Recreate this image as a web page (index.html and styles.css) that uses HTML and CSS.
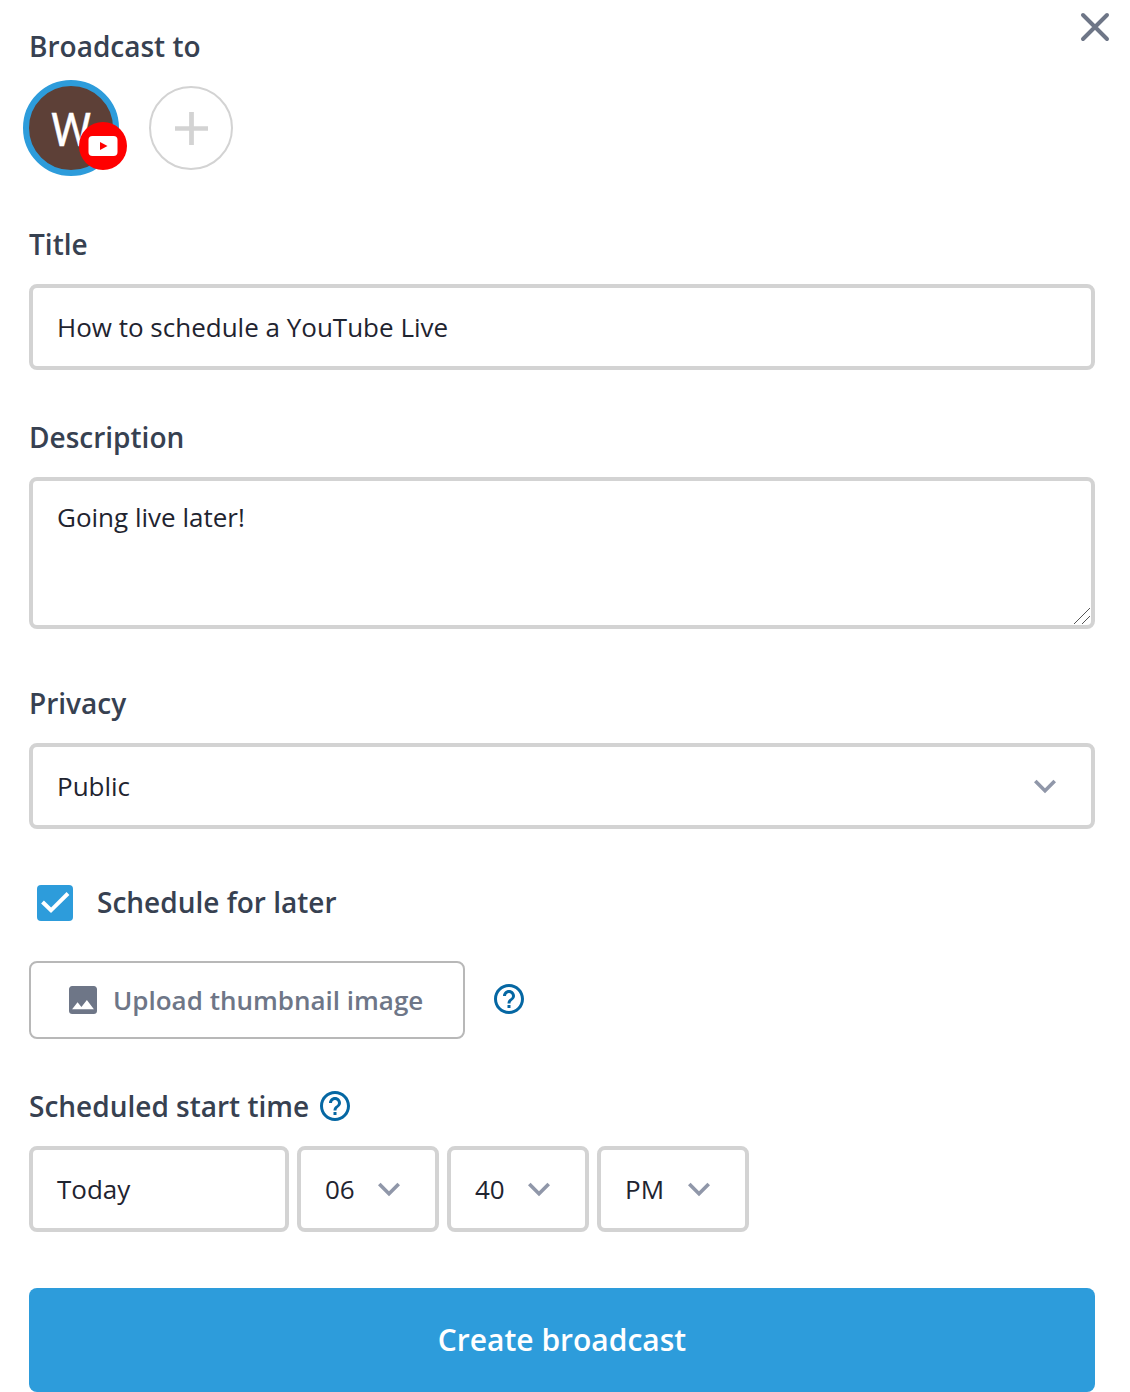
FILE: index.html
```html
<!DOCTYPE html>
<html lang="en">
<head>
<meta charset="utf-8">
<title>Create broadcast</title>
<link rel="stylesheet" href="styles.css">
</head>
<body>
<svg width="0" height="0" class="sprite" aria-hidden="true">
  <symbol id="chevron" viewBox="0 0 24 24"><path d="M7.41 8.59 12 13.17l4.59-4.58L18 10l-6 6-6-6z"/></symbol>
  <symbol id="help" viewBox="0 0 24 24"><path d="M11 18h2v-2h-2v2zm1-16C6.48 2 2 6.48 2 12s4.48 10 10 10 10-4.48 10-10S17.52 2 12 2zm0 18c-4.41 0-8-3.59-8-8s3.59-8 8-8 8 3.59 8 8-3.59 8-8 8zm0-14c-2.21 0-4 1.79-4 4h2c0-1.1.9-2 2-2s2 .9 2 2c0 2-3 1.75-3 5h2c0-2.25 3-2.5 3-5 0-2.21-1.79-4-4-4z"/></symbol>
</svg>
<form class="broadcast">
  <button class="close" type="button" aria-label="Close"><svg viewBox="0 0 30 30"><path d="M3 3l24 24M27 3 3 27"/></svg></button>

  <div class="label l-broadcast">Broadcast to</div>
  <div class="accounts">
    <div class="avatar"><span class="initial">W</span>
      <span class="badge"><svg viewBox="0 0 30 20"><rect width="29" height="20" x=".5" rx="4"/><path class="play" d="M12 6l7.5 4-7.5 4z"/></svg></span>
    </div>
    <button class="add" type="button" aria-label="Add"><svg viewBox="0 0 32 32"><path d="M16 0v32M0 16h32"/></svg></button>
  </div>

  <div class="label l-title">Title</div>
  <div class="field">How to schedule a YouTube Live</div>

  <div class="label l-desc">Description</div>
  <div class="field area">Going live later!<svg class="grip" viewBox="0 0 18 18"><path d="M1 17 17 1M9 17l8-8"/></svg></div>

  <div class="label l-privacy">Privacy</div>
  <div class="field select">Public<svg class="chevron"><use href="#chevron"/></svg></div>

  <div class="check-row">
    <span class="checkbox"><svg viewBox="0 0 36 36"><path d="M5.500 17l8.500 8.300L31 8.500"/></svg></span>
    <span class="label l-later">Schedule for later</span>
  </div>

  <div class="upload-row">
    <button class="upload" type="button">
      <svg class="image" viewBox="3 3 18 18"><path d="M21 19V5c0-1.100-.9-2-2-2H5c-1.100 0-2 .9-2 2v14c0 1.100.9 2 2 2h14c1.100 0 2-.9 2-2zM8.500 13.500l2.500 3.010L14.500 12l4.500 6H5l3.500-4.500z"/></svg>
      <span class="t-upload">Upload thumbnail image</span>
    </button>
    <svg class="help"><use href="#help"/></svg>
  </div>

  <div class="time-label"><span class="label l-time">Scheduled start time</span><svg class="help"><use href="#help"/></svg></div>
  <div class="times">
    <div class="field day">Today</div>
    <div class="field part">06<svg class="chevron"><use href="#chevron"/></svg></div>
    <div class="field part">40<svg class="chevron"><use href="#chevron"/></svg></div>
    <div class="field part period">PM<svg class="chevron"><use href="#chevron"/></svg></div>
  </div>

  <button class="create" type="submit"><span>Create broadcast</span></button>
</form>
</body>
</html>
```
FILE: styles.css
```css
* { box-sizing: border-box; }
body { margin: 0; background: #fff; font-family: "Open Sans", sans-serif; color: #1f2430; }
svg { display: block; flex: none; }
.sprite { position: absolute; }
button { font: inherit; margin: 0; padding: 0; cursor: pointer; }

.broadcast { position: relative; width: 1130px; height: 1392px; padding: 27px 35px 0 29px; overflow: hidden; }

.close { position: absolute; top: 12px; right: 20px; width: 30px; height: 30px; border: 0; background: none; }
.close svg { width: 30px; height: 30px; fill: none; stroke: #6e7687; stroke-width: 4; stroke-linecap: round; }

.label { font-size: 28px; line-height: 38px; font-weight: 600; color: #374151; white-space: nowrap; }
div.label { width: max-content; }

.accounts { display: flex; align-items: center; gap: 30px; height: 96px; margin: 15px 0 49px -6px; }
.avatar { position: relative; display: flex; align-items: center; justify-content: center; width: 96px; height: 96px; border: 6px solid #2d9cdb; border-radius: 50%; background: #5d4037; }
.initial { padding-top: 3px; font: 400 46px/56px Roboto, sans-serif; color: #fff; -webkit-text-stroke: .4px #fff; }
.badge { position: absolute; left: 50px; top: 36px; display: flex; align-items: center; justify-content: center; width: 48px; height: 48px; border-radius: 50%; background: #f00; }
.badge svg { width: 30px; height: 20px; fill: #fff; }
.badge .play { fill: #f00; }
.add { display: flex; align-items: center; justify-content: center; width: 84px; height: 84px; border: 2px solid #d3d3d3; border-radius: 50%; background: #fff; }
.add svg { width: 33px; height: 33px; stroke: #d3d3d3; stroke-width: 4.600; }

.field { position: relative; display: flex; align-items: center; height: 86px; margin-top: 21px; padding: 0 24px; border: 4px solid #d3d3d3; border-radius: 8px; background: #fff; font-size: 26px; line-height: 36px; white-space: nowrap; }
.area { align-items: flex-start; height: 152px; padding-top: 18px; }
.grip { position: absolute; right: 0; bottom: 0; width: 18px; height: 18px; stroke: #555; stroke-width: 1; }
.l-desc { margin-top: 48px; }
.l-privacy { margin-top: 55px; }
.select { justify-content: space-between; }
.chevron { width: 44px; height: 44px; fill: #9097a9; }

.check-row { display: flex; align-items: center; gap: 24px; height: 36px; margin: 56px 0 0 8px; }
.check-row .label { margin-bottom: 2px; }
.checkbox { width: 36px; height: 36px; border-radius: 4px; background: #2d9cdb; }
.checkbox svg { fill: none; stroke: #fff; stroke-width: 4; }

.upload-row { display: flex; align-items: center; gap: 26px; margin-top: 40px; }
.upload-row .help { margin-bottom: 2px; }
.upload { display: flex; align-items: center; gap: 16px; width: 436px; height: 78px; padding-left: 38px; border: 2px solid #b8b8b8; border-radius: 8px; background: #fff; color: #6e7687; font-size: 26px; font-weight: 600; white-space: nowrap; }
.image { width: 28px; height: 28px; fill: #6e7687; }
.help { width: 36px; height: 36px; fill: #0567a3; }

.time-label { display: flex; align-items: center; gap: 8px; height: 38px; margin-top: 48px; }
.times { display: flex; gap: 8px; margin-top: 21px; }
.times .field { margin: 0; }
.day { width: 260px; }
.part { width: 142px; justify-content: space-between; padding-right: 24px; }
.period { width: 152px; }

.create { display: flex; align-items: center; justify-content: center; width: 100%; height: 104px; margin-top: 56px; padding-bottom: 1px; border: 0; border-radius: 8px; background: #2d9cdb; color: #fff; font-size: 30px; font-weight: 600; }
```
